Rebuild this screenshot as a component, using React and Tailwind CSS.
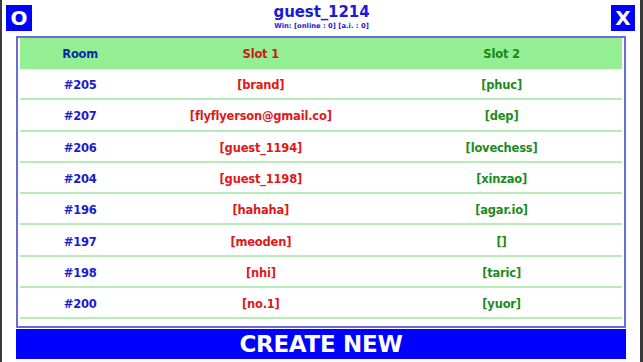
import React from "react";

const rows = [
  ["#205", "[brand]", "[phuc]"],
  ["#207", "[flyflyerson@gmail.co]", "[dep]"],
  ["#206", "[guest_1194]", "[lovechess]"],
  ["#204", "[guest_1198]", "[xinzao]"],
  ["#196", "[hahaha]", "[agar.io]"],
  ["#197", "[meoden]", "[]"],
  ["#198", "[nhi]", "[taric]"],
  ["#200", "[no.1]", "[yuor]"],
];

export default function App() {
  return (
    <div
      className="w-[643px] h-[362px] bg-white flex flex-col border-l-2 border-r-[3px] border-[#3a3a3a] overflow-hidden"
      style={{ fontFamily: '"DejaVu Sans", Verdana, sans-serif' }}
    >
      <div className="flex items-start justify-between h-[36px] pl-[4px] pr-[5px] pt-[5px]">
        <div className="w-[26px] h-[26px] bg-[#0000ff] text-white font-bold text-[20px] leading-[26px] text-center">
          O
        </div>
        <div className="flex flex-col items-center -mt-[3px]">
          <div className="text-[#1a1ad8] font-bold text-[15px] leading-[20px] tracking-[-0.1px]">
            guest_1214
          </div>
          <div className="text-[#1a1ad8] font-bold text-[6.8px] leading-[9px]">
            Win: [online : 0] [a.i. : 0]
          </div>
        </div>
        <div className="w-[24px] h-[26px] bg-[#0000ff] text-white font-bold text-[20px] leading-[26px] text-center">
          X
        </div>
      </div>
      <div className="mx-[14px] h-[292px] border-2 border-[#6b6bd6] px-[2px] flex flex-col">
        <div className="grid grid-cols-[20%_40%_40%] h-[31px] pt-[2px] bg-[#94ee94] items-center font-bold text-[11.5px] tracking-[-0.2px]">
          <div className="text-center text-[#0b2aa6]">Room</div>
          <div className="text-center text-[#d01818]">Slot 1</div>
          <div className="text-center text-[#138a13]">Slot 2</div>
        </div>
        {rows.map((r, i) => (
          <div
            key={i}
            className="grid grid-cols-[20%_40%_40%] h-[31.3px] pt-[4px] items-center font-bold text-[11.5px] tracking-[-0.2px] border-b-2 border-[#b6ecb6]"
          >
            <div className="text-center text-[#1a1ad0]">{r[0]}</div>
            <div className="text-center text-[#e01818]">{r[1]}</div>
            <div className="text-center text-[#1e8a1e]">{r[2]}</div>
          </div>
        ))}
      </div>
      <div className="mx-[14px] mt-[1px] h-[30px] bg-[#0000ff] text-white font-bold text-[23px] leading-[31px] text-center tracking-[-0.3px]">
        CREATE NEW
      </div>
    </div>
  );
}
